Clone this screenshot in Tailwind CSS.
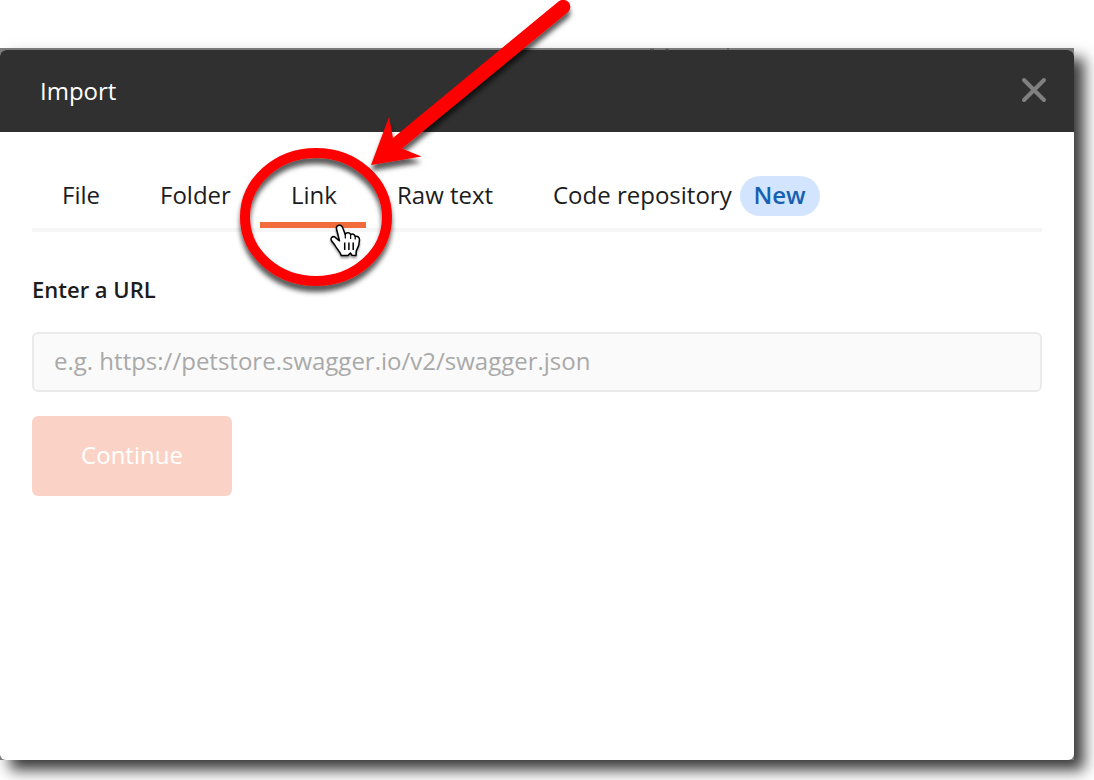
<!DOCTYPE html>
<html lang="en">
<head>
<meta charset="utf-8">
<title>Import</title>
<script src="https://cdn.jsdelivr.net/npm/@tailwindcss/browser@4"></script>
</head>
<body class="relative h-[780px] w-[1094px] overflow-hidden bg-white pt-12 font-['Open_Sans',sans-serif] text-[24px] text-[#1c1c1c]">
  <div class="h-[712px] w-[1074px] bg-[#7b7b7b] pt-[2px] shadow-[10px_10px_14px_rgba(0,0,0,0.78)]">
    <main class="flex h-[710px] flex-col overflow-hidden rounded-[6px] bg-white">
      <header class="flex h-[82px] shrink-0 items-center justify-between bg-[#303030] pr-[27px] pl-10 text-white">
        <h1 class="leading-8">Import</h1>
        <button aria-label="Close" class="-mt-[2px]">
          <svg class="block size-[26px]" viewBox="0 0 26 26" fill="none" stroke="#808080" stroke-width="4" stroke-linecap="round"><path d="M3 3L23 23M23 3L3 23"/></svg>
        </button>
      </header>
      <div class="flex flex-col px-8 pt-7">
        <nav class="flex h-[72px] border-b-4 border-[#f6f6f6] leading-[70px] whitespace-nowrap">
          <div class="w-[98px] pl-[30px]">File</div>
          <div class="w-[130px] pl-[30px]">Folder</div>
          <div class="h-[68px] w-[106px] border-b-6 border-[#f26b3a] pl-[31px]">Link</div>
          <div class="w-[156px] pl-[31px]">Raw text</div>
          <div class="flex pl-[31px]">
            <span class="w-[187px]">Code repository</span>
            <span class="mt-4 h-10 w-20 rounded-full bg-[#d3e5fe] pr-px text-center leading-[38px] font-semibold text-[#1660b0]">New</span>
          </div>
        </nav>
        <label for="url" class="mt-[41px] text-[22px] leading-8 font-semibold">Enter a URL</label>
        <input id="url" class="mt-[27px] h-[60px] rounded-[6px] border-2 border-[#eaeaea] bg-[#fafafa] px-5 pb-1 placeholder:text-[#a9a9a9]" placeholder="e.g. https://petstore.swagger.io/v2/swagger.json">
        <button class="mt-6 h-20 w-[200px] rounded-[6px] bg-[#fbd3c6] pb-[2px] text-white">Continue</button>
      </div>
    </main>
  </div>
  <svg class="pointer-events-none absolute inset-0" width="1094" height="780" viewBox="0 0 1094 780">
    <defs>
      <filter id="shadow" filterUnits="userSpaceOnUse" x="200" y="-20" width="420" height="340"><feDropShadow dx="0" dy="6" stdDeviation="2.6" flood-color="#000" flood-opacity=".65"/></filter>
      <filter id="hand" x="-30%" y="-30%" width="160%" height="170%"><feDropShadow dx="0" dy="2" stdDeviation="1" flood-color="#000" flood-opacity=".4"/></filter>
    </defs>
    <path d="M650 49.500h4M665 49.500h4M727 49h2" stroke="#555" stroke-width="1.500"/>
    <g filter="url(#hand)" transform="translate(330 224)">
      <path d="M9 1.200C11.500 .8 12.600 3 13.200 5L15.200 10.500C16 8.300 19.500 8 20.700 10.600C22.200 9.500 24.600 10.200 25 12.300C27.500 11.700 29.600 13 29.500 16C29.400 22 28 24 26.200 27L26 31.400L22 31.200L20.400 29L18 31.600H11.300C10.500 28 6.800 25 4.800 21L1.500 16.800C0 14.500 2 12 4.600 12.800L9.500 16.800L6.500 5C6 3 7.200 1.500 9 1.200Z" fill="#fff" stroke="#000" stroke-width="1.500" stroke-linejoin="round"/>
      <path d="M15.300 10V14.500M20.600 11V15M25.200 12.500V15.500" stroke="#000" stroke-width="1.200"/>
      <path d="M14.700 18.500V26M18.900 18.500V26M23.200 18.500V26" stroke="#000" stroke-width="1.500"/>
    </g>
    <g filter="url(#shadow)">
      <ellipse cx="316" cy="217" rx="71" ry="64" fill="none" stroke="#f00" stroke-width="10"/>
    </g>
    <g filter="url(#shadow)" fill="#f00">
      <path d="M558.500 1.500A7 7 0 0 1 568 12L402 148.500L421.500 156.500L371 165L389 117L393 138Z"/>
    </g>
  </svg>
</body>
</html>
